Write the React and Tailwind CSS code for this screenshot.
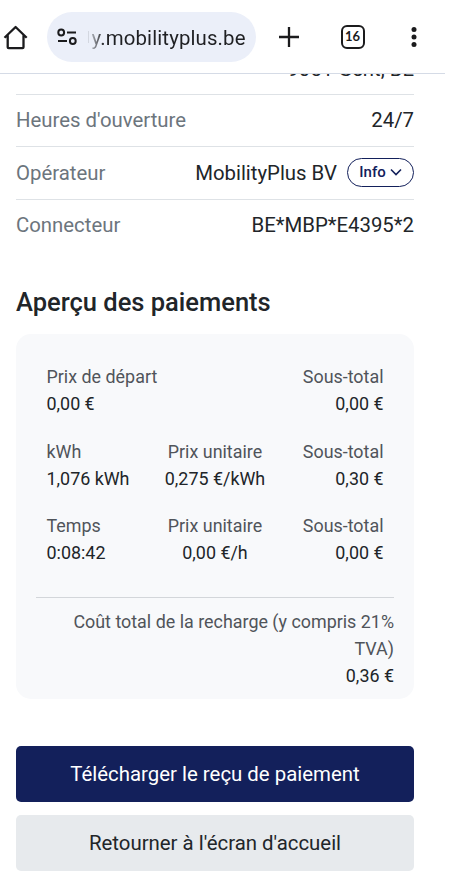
import React from 'react'

const details = [
  { label: '', value: '9051 Gent, BE' },
  { label: "Heures d'ouverture", value: '24/7' },
  { label: 'Opérateur', value: 'MobilityPlus BV', info: true },
  { label: 'Connecteur', value: 'BE*MBP*E4395*2' },
]

const payments = [
  [['Prix de départ', '0,00 €'], null, ['Sous-total', '0,00 €']],
  [['kWh', '1,076 kWh'], ['Prix unitaire', '0,275 €/kWh'], ['Sous-total', '0,30 €']],
  [['Temps', '0:08:42'], ['Prix unitaire', '0,00 €/h'], ['Sous-total', '0,00 €']],
]

const align = ['text-left', 'text-center', 'text-right']

const rowStyle = [
  'flex h-[52.5px] items-center border-b border-[#dee2e6] pt-[3px]',
  'flex h-[52.5px] items-center border-b border-[#dee2e6] pt-px',
  'flex h-[52.5px] items-center border-b border-[#dee2e6] pt-px',
  'flex h-[52.5px] items-center',
]

function BrowserBar() {
  return (
    <header className="flex h-[74px] w-[445px] shrink-0 items-center border-b border-[#d5dbe6] text-[#1b1b1d]">
      <svg className="ml-[3px] h-[26px] w-[26px]" viewBox="0 0 26 26" fill="none" stroke="currentColor" strokeWidth="2.3" strokeLinejoin="round">
        <path d="M1.5 13.8 12.6 3l11.1 10.8M4.7 11v12.2q0 1 1 1h13.8q1 0 1-1V11" />
      </svg>
      <div className="ml-[17.5px] flex h-[50px] w-[209px] items-center rounded-full bg-[#ebeff9]">
        <svg className="ml-[10px] h-5 w-5" viewBox="0 0 20 20" fill="none" stroke="currentColor" strokeWidth="2">
          <circle cx="4.2" cy="5.5" r="2.9" />
          <path d="M10 5.5h9M1 14h9" />
          <circle cx="15.8" cy="14" r="2.9" />
        </svg>
        <span className="ml-[11px] h-3 w-px bg-[#d3d7e0]" />
        <span className="mt-0.5 ml-[3px] whitespace-nowrap bg-linear-to-r from-[#a9adb5] from-0% to-[#1f2023] to-8% bg-clip-text font-['Roboto',sans-serif] text-[20.4px] leading-7 tracking-[0.13px] text-transparent">y.mobilityplus.be</span>
      </div>
      <svg className="ml-[21px] h-6 w-6" viewBox="0 0 24 24" fill="none" stroke="currentColor" strokeWidth="2.3">
        <path d="M12 2v20M2 12h20" />
      </svg>
      <div className="ml-[40px] flex h-6 w-6 items-center justify-center rounded-[6px] border-[2.4px] border-[#1b1b1d] font-['Lato',sans-serif] text-[13px] font-bold">16</div>
      <svg className="ml-[37px] h-6 w-6" viewBox="0 0 24 24" fill="currentColor">
        <circle cx="12" cy="4.5" r="2.5" />
        <circle cx="12" cy="12" r="2.5" />
        <circle cx="12" cy="19.5" r="2.5" />
      </svg>
    </header>
  )
}

function InfoButton() {
  return (
    <button className="-mt-0.5 ml-[10px] flex h-[29px] w-[67px] items-center justify-center gap-1 rounded-full border-[1.5px] border-[#13205b] text-[15px] font-medium text-[#13205b]">
      Info
      <svg className="h-3 w-3" viewBox="0 0 12 12" fill="none" stroke="currentColor" strokeWidth="1.6">
        <path d="m1 3.5 5 5 5-5" />
      </svg>
    </button>
  )
}

export default function App() {
  return (
    <div className="flex h-[894px] w-[450px] flex-col overflow-hidden bg-white font-['Roboto',sans-serif] text-[#212529]">
      <BrowserBar />
      <main className="min-h-0 w-[430px] flex-1 overflow-hidden pr-4 pl-4">
        <dl className="-mt-8 text-[20.35px]">
          {details.map((row, i) => (
            <div key={row.value} className={rowStyle[i]}>
              <dt className="text-[#6c757d]">{row.label}</dt>
              <dd className="ml-auto flex items-center">
                {row.value}
                {row.info && <InfoButton />}
              </dd>
            </div>
          ))}
        </dl>

        <h2 className="mt-[34.4px] text-[25.5px] leading-8 font-medium">Aperçu des paiements</h2>

        <section className="mt-[15.6px] h-[365px] rounded-[15px] bg-[#f8f9fb] px-5 pt-[29.4px] text-[17.9px] leading-[27px]">
          <div className="flex flex-col gap-[20.3px] px-[10.5px]">
            {payments.map((cells, i) => (
              <div key={i} className="grid grid-cols-3">
                {cells.map((cell, j) => (
                  <div key={j} className={align[j]}>
                    <p className="whitespace-nowrap text-[#50545a]">{cell && cell[0]}</p>
                    <p className="whitespace-nowrap">{cell && cell[1]}</p>
                  </div>
                ))}
              </div>
            ))}
          </div>
          <div className="mt-[31px] border-t border-[#d3d6da] pt-[10px] text-right">
            <p className="text-[#50545a]">Coût total de la recharge (y compris 21% TVA)</p>
            <p>0,36 €</p>
          </div>
        </section>

        <div className="mt-[47px] flex flex-col gap-[13px] text-[20.4px]">
          <button className="h-14 rounded-[5px] bg-[#13205b] text-white">Télécharger le reçu de paiement</button>
          <button className="h-14 rounded-[5px] bg-[#e7eaed]">Retourner à l'écran d'accueil</button>
        </div>
      </main>
    </div>
  )
}
